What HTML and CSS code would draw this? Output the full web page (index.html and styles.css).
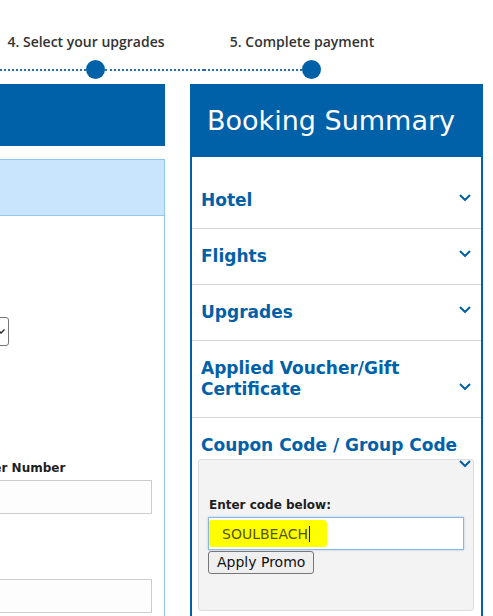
FILE: index.html
```html
<!DOCTYPE html>
<html lang="en">
<head>
<meta charset="utf-8">
<title>Booking Summary</title>
<link rel="stylesheet" href="styles.css">
</head>
<body>
<div class="page">
  <div class="steps">
    <div class="step">
      <div class="step-label">4. Select your upgrades</div>
      <div class="track"><span class="line"></span><span class="dot"></span><span class="line"></span></div>
    </div>
    <div class="step last">
      <div class="step-label">5. Complete payment</div>
      <div class="track"><span class="line"></span><span class="dot"></span><span class="line"></span></div>
    </div>
  </div>

  <div class="main">
    <section class="left">
      <div class="left-head"></div>
      <div class="left-panel">
        <div class="left-panel-head"></div>
        <div class="left-panel-body">
          <div class="fake-select">
            <svg class="select-arrow" width="8" height="5" viewBox="0 0 8 5"><polyline points="0.5,0.5 4,4 7.5,0.5" fill="none" stroke="#222" stroke-width="1.4"/></svg>
          </div>
          <div class="fields">
            <div class="field">
              <label class="field-label">Frequent Flyer Number</label>
              <div class="text-input"></div>
            </div>
            <div class="field second">
              <div class="text-input"></div>
            </div>
          </div>
        </div>
      </div>
    </section>

    <aside class="summary">
      <div class="summary-head">Booking Summary</div>
      <div class="summary-body">
        <div class="acc-item">
          <h3 class="acc-title">Hotel<svg class="chev" width="12" height="7" viewBox="0 0 12 7"><polyline points="1,1 6,6 11,1" fill="none" stroke="#0060a8" stroke-width="2"/></svg></h3>
        </div>
        <div class="acc-item">
          <h3 class="acc-title">Flights<svg class="chev" width="12" height="7" viewBox="0 0 12 7"><polyline points="1,1 6,6 11,1" fill="none" stroke="#0060a8" stroke-width="2"/></svg></h3>
        </div>
        <div class="acc-item">
          <h3 class="acc-title">Upgrades<svg class="chev" width="12" height="7" viewBox="0 0 12 7"><polyline points="1,1 6,6 11,1" fill="none" stroke="#0060a8" stroke-width="2"/></svg></h3>
        </div>
        <div class="acc-item">
          <h3 class="acc-title">Applied Voucher/Gift Certificate<svg class="chev" width="12" height="7" viewBox="0 0 12 7"><polyline points="1,1 6,6 11,1" fill="none" stroke="#0060a8" stroke-width="2"/></svg></h3>
        </div>
        <div class="acc-item coupon">
          <h3 class="acc-title">Coupon Code / Group Code<svg class="chev" width="12" height="7" viewBox="0 0 12 7"><polyline points="1,1 6,6 11,1" fill="none" stroke="#0060a8" stroke-width="2"/></svg></h3>
          <div class="coupon-box">
            <div class="coupon-label">Enter code below:</div>
            <div class="code-input"><span class="hl">SOULBEACH<span class="caret"></span></span></div>
            <button class="btn" type="button">Apply Promo</button>
          </div>
        </div>
      </div>
    </aside>
  </div>
</div>
</body>
</html>
```

FILE: styles.css
```css
* { box-sizing: border-box; }

html, body {
  margin: 0;
  padding: 0;
  background: #ffffff;
}

body {
  height: 100vh;
  overflow: hidden;
  font-family: "DejaVu Sans", Verdana, sans-serif;
}

.page {
  width: 493px;
}

/* ---------- progress steps ---------- */
.steps {
  display: flex;
  margin-left: -12.5px;
  padding-top: 32px;
}

.step {
  width: 216px;
  display: flex;
  flex-direction: column;
  align-items: center;
}

.step-label {
  font-family: "Open Sans", sans-serif;
  font-weight: 600;
  font-size: 14px;
  line-height: 19px;
  color: #333333;
  padding-right: 19px;
  white-space: nowrap;
}

.track {
  display: flex;
  align-items: center;
  width: 100%;
  height: 19px;
  margin-top: 9px;
}

.track .line {
  flex: 1;
  border-top: 2px dotted #2f6cae;
}

.step.last .track .line:last-child {
  visibility: hidden;
}

.track .dot {
  width: 19px;
  height: 19px;
  border-radius: 50%;
  background: #0060a8;
}

/* ---------- main layout ---------- */
.main {
  display: flex;
  align-items: flex-start;
  gap: 25px;
  margin-top: 5px;
}

.left {
  width: 365px;
  margin-left: -200px;
  flex-shrink: 0;
}

.left-head {
  height: 62px;
  background: #0060a8;
}

.left-panel {
  margin-top: 13px;
  border: 1px solid #90c8f0;
}

.left-panel-head {
  height: 56px;
  background: #c8e5fd;
  border-bottom: 1px solid #90c8f0;
}

.left-panel-body {
  height: 420px;
  padding: 101px 12px 0 20px;
}

.fake-select {
  width: 188px;
  height: 29px;
  border: 1px solid #767676;
  border-radius: 3px;
  display: flex;
  align-items: center;
  justify-content: flex-end;
  padding-right: 3px;
}

.select-arrow {
  display: block;
}

.fields {
  padding-left: 87px;
  margin-top: 114px;
}

.field-label {
  display: block;
  font-weight: bold;
  font-size: 12px;
  line-height: 16px;
  color: #1e1e1e;
  margin-bottom: 4px;
  white-space: nowrap;
}

.text-input {
  height: 34px;
  border: 1px solid #cccccc;
  background: #fdfdfd;
}

.field.second {
  margin-top: 65px;
}

/* ---------- booking summary ---------- */
.summary {
  width: 293px;
  flex-shrink: 0;
  border-left: 2px solid #0060a8;
  border-right: 2px solid #0060a8;
  height: 560px;
}

.summary-head {
  height: 73px;
  background: #0060a8;
  color: #ffffff;
  font-size: 27px;
  display: flex;
  align-items: center;
  padding-left: 17px;
  margin: 0 -2px;
}

.summary-body {
  padding-top: 16px;
}

.acc-item {
  padding: 17px 7px 17px 6px;
  border-bottom: 1px solid #d6d6d6;
}

.acc-title {
  margin: 0;
  padding: 0 3px;
  font-size: 17px;
  font-weight: bold;
  line-height: 21px;
  color: #0060a8;
}

.chev {
  float: right;
  margin-top: 4px;
  margin-left: 8px;
  display: block;
}

.acc-item.coupon {
  border-bottom: none;
  padding-bottom: 0;
}

.coupon-box {
  margin-top: 3px;
  background: #f3f3f3;
  border: 1px solid #dcdcdc;
  border-radius: 3px;
  padding: 37px 9px 36px 9px;
}

.coupon-label {
  font-weight: bold;
  font-size: 12px;
  line-height: 16px;
  color: #1e1e1e;
  margin-bottom: 4px;
  padding-left: 1px;
}

.code-input {
  height: 33px;
  border: 1px solid #86b7e3;
  background: #ffffff;
  box-shadow: 0 0 2px rgba(100, 160, 220, 0.5);
  padding-top: 2px;
}

.hl {
  display: inline-flex;
  align-items: center;
  height: 27px;
  padding: 0 17px 0 13px;
  background: #ffff00;
  border-radius: 2px 4px 3px 2px;
  color: #555500;
  font-size: 14px;
}

.caret {
  display: inline-block;
  width: 1px;
  height: 16px;
  background: #111111;
  margin-left: 1px;
}

.btn {
  display: block;
  margin-top: 1px;
  height: 23px;
  padding: 0 8px;
  font-family: "DejaVu Sans", Verdana, sans-serif;
  font-size: 14px;
  line-height: 21px;
  color: #111111;
  background: #efefef;
  border: 1px solid #767676;
  border-radius: 3px;
}
```
